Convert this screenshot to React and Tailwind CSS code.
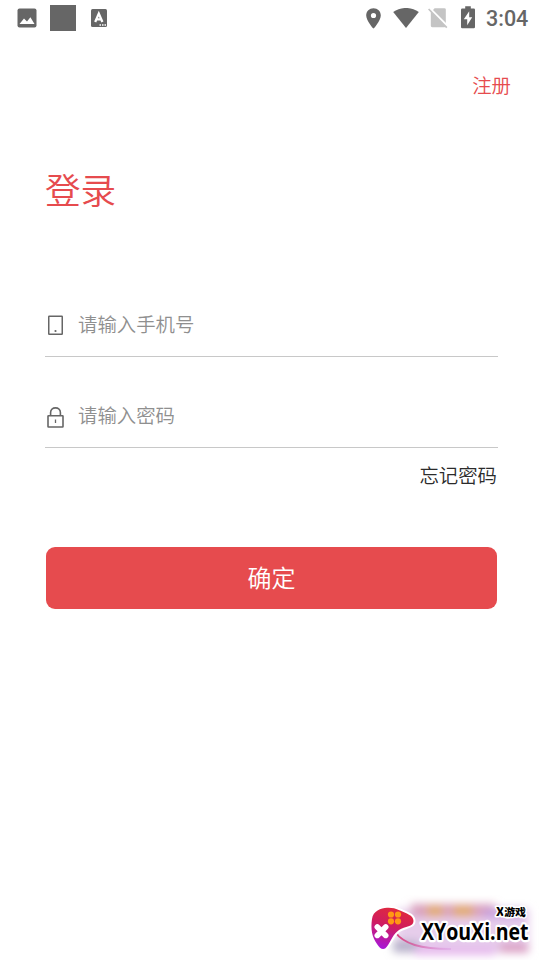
import React, { useState } from "react";

function StatusBar() {
  return (
    <div className="flex h-9 items-center text-[#666666]">
      <svg className="ml-[17px] h-5 w-5 shrink-0" viewBox="0 0 20 20">
        <rect x="0.5" y="0.5" width="19" height="19" rx="2" fill="currentColor" />
        <path d="M2.5 16 L7 10.5 L10 13.6 L13.4 9.3 L17.5 16 Z" fill="#fff" />
      </svg>
      <div className="ml-[13px] h-[26px] w-[26px] shrink-0 bg-[#666666]" />
      <svg className="ml-[15px] h-[18px] w-4 shrink-0" viewBox="0 0 16 18">
        <rect width="16" height="18" rx="1.5" fill="currentColor" />
        <path d="M4.2 13 L7.8 4.6 L11.4 13 M5.5 10.4 H10.1" fill="none" stroke="#fff" strokeWidth="2.3" />
        <path d="M8.5 16 h1.5 m1 0 h1.5 m1 0 h1.5" stroke="#fff" strokeWidth="1.3" />
      </svg>
      <svg className="ml-auto h-[21px] w-[15px] shrink-0" viewBox="0 0 15 21">
        <path
          fill="currentColor"
          fillRule="evenodd"
          d="M7.5 0.3 C3.4 0.3 0.2 3.4 0.2 7.4 C0.2 12.7 7.5 20.6 7.5 20.6 C7.5 20.6 14.8 12.7 14.8 7.4 C14.8 3.4 11.6 0.3 7.5 0.3 Z M7.5 4.9 a2.6 2.6 0 1 1 0 5.2 a2.6 2.6 0 1 1 0 -5.2 Z"
        />
      </svg>
      <svg className="ml-3 h-[21px] w-[26px] shrink-0" viewBox="0 0 26 21">
        <path fill="currentColor" d="M0.2 4 C7.5 -1.4 18.5 -1.4 25.8 4 L13 20 Z" />
      </svg>
      <svg className="ml-[9px] h-[22px] w-5 shrink-0" viewBox="0 0 20 22">
        <path fill="#c4c4c4" d="M6.6 1.2 H16.4 a1.4 1.4 0 0 1 1.4 1.4 V17 L4.6 3.4 Z" />
        <path fill="#c4c4c4" d="M2.8 4.5 L17.6 19.6 Q17.2 20.2 16.4 20.2 H4.2 a1.4 1.4 0 0 1 -1.4 -1.4 Z" />
        <path stroke="#fff" strokeWidth="1.8" d="M1.6 0.8 L19.8 19.2" />
        <path stroke="#c4c4c4" strokeWidth="1.7" d="M0.6 2 L18.8 20.6" />
      </svg>
      <svg className="ml-[13px] h-[23px] w-[14px] shrink-0 -translate-y-px" viewBox="0 0 14 23">
        <path
          fill="currentColor"
          d="M4.2 0.3 H9.8 V2.5 H12.8 Q14 2.5 14 3.7 V21 Q14 22.2 12.8 22.2 H1.2 Q0 22.2 0 21 V3.7 Q0 2.5 1.2 2.5 H4.2 Z"
        />
        <path fill="#fff" d="M8.2 5.3 L2.8 13.3 H6.2 V19.3 L11.2 11.2 H8.2 Z" />
      </svg>
      <span className="ml-[11px] mr-3 mt-0.5 w-[42px] whitespace-nowrap font-[Roboto,sans-serif] text-[21.5px] font-medium leading-9">
        3:04
      </span>
    </div>
  );
}

function PhoneIcon() {
  return (
    <svg className="h-[21px] w-[17px]" viewBox="0 0 17 21" fill="none" stroke="#666">
      <rect x="1.75" y="1.25" width="13.5" height="18" rx="0.5" strokeWidth="1.5" />
      <circle cx="8.5" cy="16" r="1.1" fill="#666" stroke="none" />
    </svg>
  );
}

function LockIcon() {
  return (
    <svg className="mt-0.5 h-[21px] w-[17px]" viewBox="0 0 17 21" fill="none" stroke="#666" strokeWidth="1.6">
      <rect x="1" y="8.8" width="15" height="11.2" rx="0.5" />
      <path d="M3.6 9 V5.6 C3.6 2.7 5.8 0.9 8.5 0.9 C11.2 0.9 13.4 2.7 13.4 5.6 V9" />
      <path d="M8.5 12.5 V16" strokeWidth="1.3" />
    </svg>
  );
}

function Field({ icon, type, value, onChange, placeholder }) {
  return (
    <div className="flex h-[61px] items-center border-b-[1.5px] border-[#c8c8c8] pb-[3px]">
      <div className="ml-0.5 mt-0.5 w-[31px] shrink-0">{icon}</div>
      <input
        type={type}
        value={value}
        onChange={(e) => onChange(e.target.value)}
        placeholder={placeholder}
        className="mb-0.5 w-full min-w-0 bg-transparent text-[19.4px] leading-7 font-[350] text-[#333333] placeholder:text-[#8f8f8f] focus:outline-none"
      />
    </div>
  );
}

function SiteLogo() {
  return (
    <svg className="h-[65px] w-[185px]" viewBox="0 0 185 65">
      <defs>
        <linearGradient id="pad" x1="0.6" y1="0" x2="0.3" y2="1">
          <stop offset="0" stopColor="#e02a3c" />
          <stop offset="0.45" stopColor="#cf1c60" />
          <stop offset="1" stopColor="#a818d8" />
        </linearGradient>
        <linearGradient id="cord" x1="0" x2="1">
          <stop offset="0" stopColor="#d83a78" />
          <stop offset="1" stopColor="#d58ae0" stopOpacity="0.3" />
        </linearGradient>
        <filter id="haze" x="-20%" y="-60%" width="140%" height="220%">
          <feGaussianBlur stdDeviation="4.5" />
        </filter>
      </defs>
      <g filter="url(#haze)">
        <rect x="42" y="14" width="132" height="44" fill="#e6cdeb" />
        <rect x="38" y="46" width="26" height="11" fill="#b4b0c8" />
        <rect x="56" y="9" width="84" height="13" fill="#d9a0bd" />
        <rect x="72" y="11" width="16" height="11" fill="#e2aa68" />
        <rect x="98" y="11" width="20" height="11" fill="#e2aa68" />
        <rect x="129" y="14" width="40" height="9" fill="#c6a0e0" />
        <rect x="60" y="52" width="80" height="8" fill="#e5b6ed" />
        <rect x="145" y="49" width="28" height="8" fill="#d997bd" />
      </g>
      <path d="M40 37 C49 49 65 54 96 54" fill="none" stroke="url(#cord)" strokeWidth="2" />
      <path
        d="M17 24 C18 16 26 13 32 12.8 C36 12.6 40 13 45 15.5 C51 18.5 58.5 20 58.5 26 C58.5 32 50 31 44 35 C38 39 36 46 32 51.5 C29 56 25 54 22 49 C17 42 15.5 34 17 24 Z"
        fill="url(#pad)"
        stroke="#fff"
        strokeWidth="4"
        paintOrder="stroke"
      />
      <path d="M22.3 32 L30.7 40.4 M30.7 32 L22.3 40.4" stroke="#fff" strokeWidth="5.6" strokeLinecap="round" />
      <g fill="#ff9814">
        <circle cx="36" cy="19.5" r="3.1" />
        <circle cx="43" cy="19.5" r="3.1" />
        <circle cx="36" cy="26.3" r="3.1" />
        <circle cx="43" cy="26.3" r="3.1" />
      </g>
      <g fill="#000" stroke="#fff" strokeLinejoin="round" paintOrder="stroke">
        <text
          x="66"
          y="45"
          textLength="107.5"
          lengthAdjust="spacingAndGlyphs"
          strokeWidth="4.5"
          className="font-['Open_Sans',sans-serif] text-[24px] font-bold"
        >
          XYouXi.net
        </text>
        <text
          x="141"
          y="20.6"
          textLength="30"
          lengthAdjust="spacingAndGlyphs"
          strokeWidth="3"
          className="font-['Noto_Sans_CJK_SC',sans-serif] text-[10.5px] font-black"
        >
          <tspan className="text-[12px]">X</tspan>游戏
        </text>
      </g>
    </svg>
  );
}

export default function App() {
  const [phone, setPhone] = useState("");
  const [password, setPassword] = useState("");

  return (
    <div className="flex h-[960px] w-[540px] flex-col overflow-hidden bg-white font-['Noto_Sans_CJK_SC',sans-serif]">
      <StatusBar />
      <div className="mt-[35px] mr-[29px] flex justify-end">
        <button type="button" className="text-[19.4px] leading-7 font-[350] text-[#e64b4e]">
          注册
        </button>
      </div>
      <h1 className="mt-[64px] ml-[45px] text-[35.6px] leading-[52px] font-[350] text-[#e64b4e]">
        登录
      </h1>
      <form className="mt-[81px] mr-[42px] ml-[45px] flex flex-col" onSubmit={(e) => e.preventDefault()}>
        <Field icon={<PhoneIcon />} type="tel" value={phone} onChange={setPhone} placeholder="请输入手机号" />
        <div className="mt-[30px]">
          <Field icon={<LockIcon />} type="password" value={password} onChange={setPassword} placeholder="请输入密码" />
        </div>
        <button type="button" className="mt-[13px] mr-px self-end text-[19.4px] leading-7 font-[350] text-[#2b2b2b]">
          忘记密码
        </button>
        <button
          type="submit"
          className="mt-[58px] mr-px ml-px h-[62px] rounded-[9px] bg-[#e64b4e] pb-0.5 text-[24px] font-[350] text-white"
        >
          确定
        </button>
      </form>
      <div className="mt-auto flex justify-end">
        <SiteLogo />
      </div>
    </div>
  );
}
